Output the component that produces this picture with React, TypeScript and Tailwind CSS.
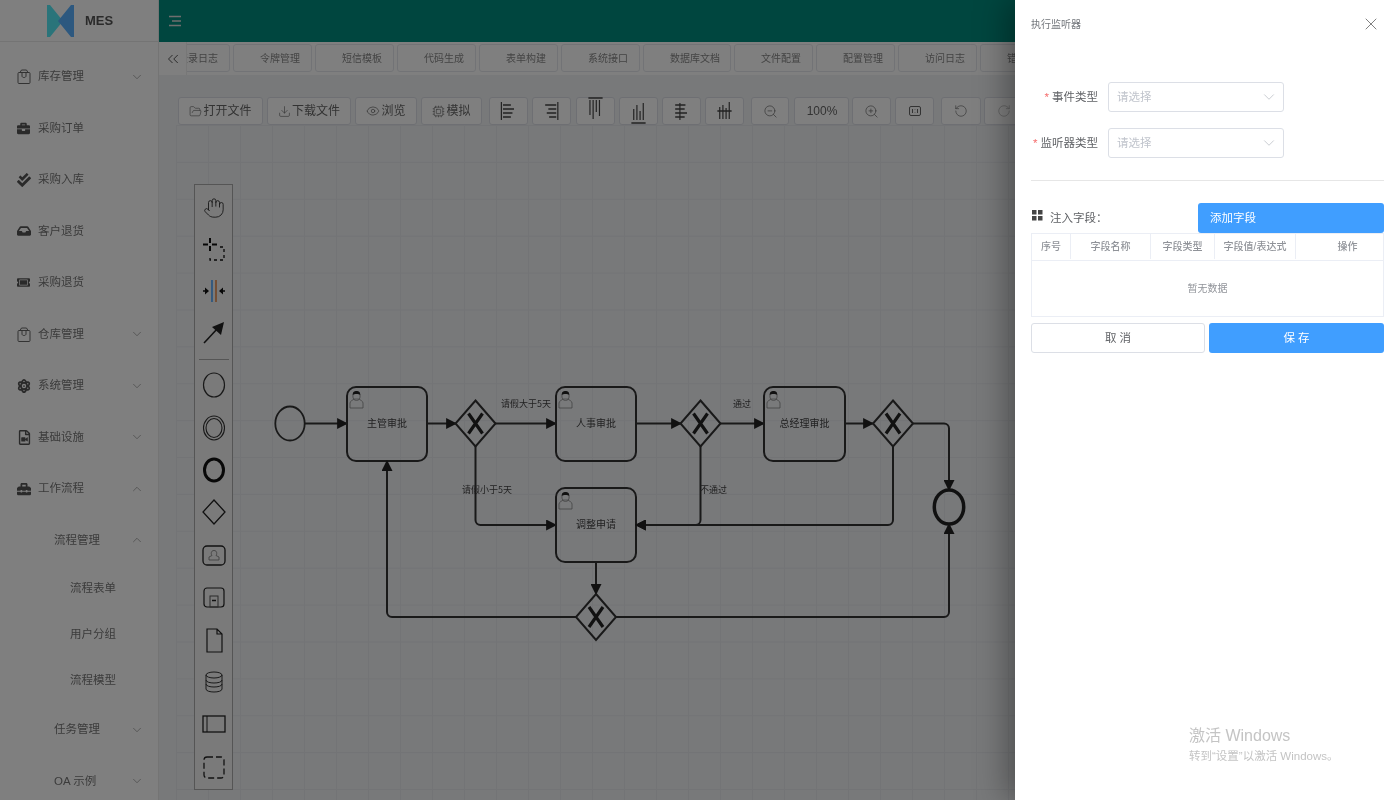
import type { ReactNode } from 'react';
import { ChevronDown, ChevronUp, ChevronsLeft, Download, Eye, FolderOpen, Cpu, Hand, RotateCcw, RotateCw, X, ZoomIn, ZoomOut } from 'lucide-react';
import { FaAtom, FaBriefcase, FaCheckDouble, FaInbox, FaRegFileVideo, FaTicketAlt, FaToolbox } from 'react-icons/fa';

type MenuItem = { label: string; icon?: ReactNode; depth: 0 | 1 | 2; arrow?: 'up' | 'down' };

const BagIcon = () => (
  <svg width="14" height="15" viewBox="0 0 14 15" fill="none" stroke="#666" strokeWidth="1">
    <rect x="1" y="3.500" width="12" height="11" rx="1" />
    <path d="M3 3.500 4.500 1h5L11 3.500M5 3.500v3.500c0 2 4 2 4 0V3.500" />
  </svg>
);

const MENU: MenuItem[] = [
  { label: '库存管理', icon: <BagIcon />, depth: 0, arrow: 'down' },
  { label: '采购订单', icon: <FaBriefcase size={13} />, depth: 0 },
  { label: '采购入库', icon: <FaCheckDouble size={14} />, depth: 0 },
  { label: '客户退货', icon: <FaInbox size={14} />, depth: 0 },
  { label: '采购退货', icon: <FaTicketAlt size={13} />, depth: 0 },
  { label: '仓库管理', icon: <BagIcon />, depth: 0, arrow: 'down' },
  { label: '系统管理', icon: <FaAtom size={14} />, depth: 0, arrow: 'down' },
  { label: '基础设施', icon: <FaRegFileVideo size={15} />, depth: 0, arrow: 'down' },
  { label: '工作流程', icon: <FaToolbox size={14} />, depth: 0, arrow: 'up' },
  { label: '流程管理', depth: 1, arrow: 'up' },
  { label: '流程表单', depth: 2 },
  { label: '用户分组', depth: 2 },
  { label: '流程模型', depth: 2 },
  { label: '任务管理', depth: 1, arrow: 'down' },
  { label: 'OA 示例', depth: 1, arrow: 'down' },
];

const TABS = [
  { label: '登录日志', w: 'w-[79px]' },
  { label: '令牌管理', w: 'w-[79px]' },
  { label: '短信模板', w: 'w-[79px]' },
  { label: '代码生成', w: 'w-[79px]' },
  { label: '表单构建', w: 'w-[79px]' },
  { label: '系统接口', w: 'w-[79px]' },
  { label: '数据库文档', w: 'w-[88px]' },
  { label: '文件配置', w: 'w-[79px]' },
  { label: '配置管理', w: 'w-[79px]' },
  { label: '访问日志', w: 'w-[79px]' },
  { label: '错误日志', w: 'w-[79px]' },
];

function Bars({ lines }: { lines: number[][] }) {
  return (
    <svg width="19" height="24" viewBox="0 0 24 24" preserveAspectRatio="none" stroke="#444" strokeWidth="1.500" className="overflow-visible">
      {lines.map(([x1, y1, x2, y2], i) => (
        <line key={i} x1={x1} y1={y1} x2={x2} y2={y2} />
      ))}
    </svg>
  );
}

const ALIGN_ICONS: number[][][] = [
  [[3, 3, 3, 21], [5, 6, 15, 6], [5, 10, 19, 10], [5, 14, 17, 14], [5, 18, 15, 18]],
  [[20, 3, 20, 21], [4, 6, 18, 6], [8, 10, 18, 10], [6, 14, 18, 14], [9, 18, 18, 18]],
  [[3, -1, 21, -1], [5, 1, 5, 16], [9, 1, 9, 20], [13, 1, 13, 13], [17, 1, 17, 17]],
  [[3, 24, 21, 24], [6, 10, 6, 21], [10, 6, 10, 21], [14, 12, 14, 21], [18, 4, 18, 21]],
  [[10, 4, 10, 21], [4, 6, 17, 6], [4, 10, 16, 10], [4, 14, 19, 14], [4, 18, 16, 18]],
  [[3, 12, 21, 12], [6, 8, 6, 20], [10, 6, 10, 20], [14, 9, 14, 20], [18, 3, 18, 20]],
];

function ToolButton({ className, children }: { className: string; children: ReactNode }) {
  return (
    <div className={`h-[28px] flex items-center justify-center gap-px shrink-0 bg-white border border-[#dcdfe6] rounded-[3px] text-[12px] text-[#666] ${className}`}>
      {children}
    </div>
  );
}

function Person({ x, y }: { x: number; y: number }) {
  return (
    <g transform={`translate(${x} ${y})`}>
      <path d="M1 18v-5c0-2 3-3 4-4h5c1 1 4 2 4 4v5z" fill="#fff" fillOpacity="0.15" stroke="#777" strokeWidth="0.700" />
      <ellipse cx="7.500" cy="6" rx="3.600" ry="4.400" fill="#fff" fillOpacity="0.15" stroke="#777" strokeWidth="0.700" />
      <path d="M3.800 5C3.600 1.800 5.500 1 7.500 1s3.900.8 3.700 4c-1.500-1.300-5.800-1.300-7.400 0z" fill="#222" />
    </g>
  );
}

function Task({ x, y, w, label }: { x: number; y: number; w: number; label: string }) {
  return (
    <g>
      <rect x={x} y={y} width={w} height={74} rx={9} fill="#fff" fillOpacity="0.06" stroke="#333" strokeWidth="2" />
      <Person x={x + 2} y={y + 3} />
      <text x={x + w / 2} y={y + 40} textAnchor="middle" fontSize="10" fill="#444">{label}</text>
    </g>
  );
}

function Gateway({ cx, cy }: { cx: number; cy: number }) {
  return (
    <g>
      <polygon points={`${cx},${cy - 23} ${cx + 20},${cy} ${cx},${cy + 23} ${cx - 20},${cy}`} fill="none" stroke="#333" strokeWidth="2" />
      <path d={`M${cx - 7},${cy - 10} L${cx + 7},${cy + 10} M${cx + 7},${cy - 10} L${cx - 7},${cy + 10}`} stroke="#222" strokeWidth="3.200" />
    </g>
  );
}

function Arrow({ d }: { d: string }) {
  return <path d={d} fill="none" stroke="#333" strokeWidth="2" markerEnd="url(#flow-end)" />;
}

function Diagram() {
  return (
    <svg className="absolute left-0 top-0" width="839" height="675" viewBox="176 125 839 675" fontFamily="'Noto Sans CJK SC', sans-serif">
      <defs>
        <marker id="flow-end" viewBox="0 0 10 10" refX="9" refY="5" markerWidth="5.500" markerHeight="5.500" orient="auto">
          <path d="M0 0 10 5 0 10z" fill="#222" />
        </marker>
      </defs>
      <ellipse cx="290" cy="423.500" rx="14.700" ry="17" fill="none" stroke="#333" strokeWidth="1.800" />
      <Arrow d="M305 423.500H347" />
      <Task x={347} y={387} w={80} label="主管审批" />
      <Arrow d="M427 423.500H456" />
      <Gateway cx={475.500} cy={423.500} />
      <Arrow d="M495 423.500H556" />
      <Task x={556} y={387} w={80} label="人事审批" />
      <Arrow d="M636 423.500H681" />
      <Gateway cx={700.500} cy={423.500} />
      <Arrow d="M720 423.500H764" />
      <Task x={764} y={387} w={81} label="总经理审批" />
      <Arrow d="M845 423.500H873" />
      <Gateway cx={893} cy={423.500} />
      <Arrow d="M913 423.500H944a5 5 0 0 1 5 5V490" />
      <ellipse cx="949" cy="507" rx="14.700" ry="17" fill="none" stroke="#222" strokeWidth="3.500" />
      <Arrow d="M475.500 446V520a5 5 0 0 0 5 5H556" />
      <Task x={556} y={488} w={80} label="调整申请" />
      <Arrow d="M700.500 446V520a5 5 0 0 1-5 5H636" />
      <Arrow d="M893 446V520a5 5 0 0 1-5 5H636" />
      <Arrow d="M596 562V594" />
      <Gateway cx={596} cy={617} />
      <Arrow d="M576 617H392a5 5 0 0 1-5-5V461" />
      <Arrow d="M616 617H944a5 5 0 0 0 5-5V524" />
      <g fontSize="9" fill="#444">
        <text x="501" y="407">请假大于5天</text>
        <text x="462" y="493">请假小于5天</text>
        <text x="733" y="407">通过</text>
        <text x="700" y="493">不通过</text>
      </g>
    </svg>
  );
}

const PALETTE_TOOLS: ReactNode[] = [
  <Hand key="h" size={22} strokeWidth={1} color="#333" />,
  <svg key="l" width="26" height="26" viewBox="0 0 26 26" fill="none" stroke="#111">
    <path d="M9 2v5M9 10v5M2 8.500h5M11 8.500h5" strokeWidth="2" />
    <path d="M19 11h4v13H9v-5" strokeDasharray="3 3" strokeWidth="1.300" />
  </svg>,
  <svg key="s" width="26" height="26" viewBox="0 0 26 26" fill="none">
    <path d="M11 2v22" stroke="#1e90ff" strokeWidth="1.300" />
    <path d="M15 2v22" stroke="#e07020" strokeWidth="1.300" />
    <path d="M2 13h3M21 13h3" stroke="#111" strokeWidth="1.400" />
    <path d="M8 13l-4-3.500v7zM18 13l4-3.500v7z" fill="#111" />
  </svg>,
  <svg key="c" width="26" height="26" viewBox="0 0 26 26" fill="none">
    <path d="M3 24 17 9" stroke="#222" strokeWidth="1.600" />
    <path d="M23 3l-3 13-9-8z" fill="#222" />
  </svg>,
];

const PALETTE_SHAPES: ReactNode[] = [
  <svg key="e" width="26" height="30" viewBox="0 0 26 30" fill="none" stroke="#333"><ellipse cx="13" cy="15" rx="10.500" ry="12" strokeWidth="1.200" /></svg>,
  <svg key="i" width="26" height="30" viewBox="0 0 26 30" fill="none" stroke="#333"><ellipse cx="13" cy="15" rx="10.500" ry="12" strokeWidth="1.100" /><ellipse cx="13" cy="15" rx="8" ry="9.500" strokeWidth="1.100" /></svg>,
  <svg key="t" width="26" height="30" viewBox="0 0 26 30" fill="none" stroke="#111"><ellipse cx="13" cy="15" rx="9.500" ry="11" strokeWidth="3" /></svg>,
  <svg key="g" width="26" height="30" viewBox="0 0 26 30" fill="none" stroke="#222"><polygon points="13,3 24,15 13,27 2,15" strokeWidth="1.300" /></svg>,
  <svg key="u" width="26" height="26" viewBox="0 0 26 26" fill="none" stroke="#222"><rect x="2" y="4" width="22" height="19" rx="4" strokeWidth="1.300" /><path d="M8 18v-3l3-1.500c-1-.8-1.500-5 2-5s3 4.200 2 5l3 1.500v3z" stroke="#777" strokeWidth="0.800" /></svg>,
  <svg key="p" width="26" height="26" viewBox="0 0 26 26" fill="none" stroke="#222"><rect x="3" y="4" width="20" height="19" rx="3" strokeWidth="1.200" /><rect x="9" y="12" width="8" height="11" stroke="#555" /><path d="M11 16.500h4" strokeWidth="1.500" /></svg>,
  <svg key="d" width="26" height="26" viewBox="0 0 26 26" fill="none" stroke="#222"><path d="M6 2h10l5 5v18H6zM16 2v5h5" strokeWidth="1.200" /></svg>,
  <svg key="b" width="26" height="26" viewBox="0 0 26 26" fill="none" stroke="#333" strokeWidth="1"><ellipse cx="13" cy="6" rx="8" ry="3" /><path d="M5 6v14c0 4 16 4 16 0V6M5 11c0 4 16 4 16 0M5 15c0 4 16 4 16 0" /></svg>,
  <svg key="o" width="26" height="26" viewBox="0 0 26 26" fill="none" stroke="#222"><rect x="2" y="5" width="22" height="16" strokeWidth="1.300" /><path d="M6 5v16" strokeWidth="1" /></svg>,
  <svg key="r" width="26" height="26" viewBox="0 0 26 26" fill="none" stroke="#222"><rect x="3" y="3" width="20" height="21" rx="3" strokeWidth="1.300" strokeDasharray="6 3" /></svg>,
];

function Palette() {
  return (
    <div className="absolute left-[18px] top-[59px] w-[39px] h-[606px] pt-[2px] bg-[#f5f5f5] border border-[#aaa] flex flex-col items-center">
      {PALETTE_TOOLS.map((icon, i) => (
        <div key={i} className="h-[41.500px] w-full flex items-center justify-center shrink-0">{icon}</div>
      ))}
      <div className="w-[30px] mt-[6px] mb-[4px] border-t border-[#aaa] shrink-0" />
      {PALETTE_SHAPES.map((icon, i) => (
        <div key={i} className="h-[42.400px] w-full flex items-center justify-center shrink-0">{icon}</div>
      ))}
    </div>
  );
}

function Sidebar() {
  return (
    <aside className="w-[159px] shrink-0 h-full bg-white border-r border-[#e8e8e8] overflow-hidden">
      <div className="h-[42px] flex items-center pl-[47px] border-b border-[#e8e8e8]">
        <svg width="28" height="34" viewBox="0 0 28 34">
          <polygon points="0,1 3,1 16,17 3,33 0,33" fill="#55e8f5" />
          <polygon points="27,1 24,1 11,17 24,33 27,33" fill="#5ab0ff" />
        </svg>
        <span className="ml-[10px] text-[13px] font-bold text-[#555]">MES</span>
      </div>
      <div className="pt-[9px]">
        {MENU.map((m) => (
          <div
            key={m.label}
            className={
              m.depth === 2
                ? 'h-[46px] flex items-center pl-[70px] text-[11.500px] text-[#777]'
                : m.depth === 1
                  ? 'h-[51.500px] flex items-center pl-[54px] pr-[14px] text-[11.500px] text-[#777]'
                  : 'h-[51.500px] flex items-center pl-[17px] pr-[14px] text-[11.500px] text-[#777]'
            }
          >
            {m.icon && <span className="w-[21px] shrink-0 flex items-center text-[#555]">{m.icon}</span>}
            <span>{m.label}</span>
            {m.arrow === 'down' && <ChevronDown size={14} strokeWidth={1} color="#777" className="ml-auto" />}
            {m.arrow === 'up' && <ChevronUp size={14} strokeWidth={1} color="#777" className="ml-auto" />}
          </div>
        ))}
      </div>
    </aside>
  );
}

function Main() {
  return (
    <main className="flex-1 min-w-0 h-full flex flex-col bg-[#f0f2f5]">
      <header className="h-[42px] shrink-0 bg-[#008c7e] flex items-center pl-[10px]">
        <svg width="12" height="12" viewBox="0 0 12 12" stroke="#ddd" strokeWidth="1.500">
          <path d="M0 1.500h12M3 6h9M0 10.500h12" />
        </svg>
      </header>
      <div className="h-[33px] shrink-0 bg-white flex">
        <div className="w-[28px] shrink-0 flex items-center justify-center bg-white border-r border-[#eee]">
          <ChevronsLeft size={18} color="#444" strokeWidth={1.200} />
        </div>
        <div className="flex-1 min-w-0 overflow-hidden flex gap-[3px] pt-[2px] h-[33px]">
          {TABS.map((t, i) => (
            <div
              key={t.label}
              className={`h-[28px] shrink-0 flex items-center pl-[26px] pt-[1px] bg-white border border-[#e4e7ed] rounded-[3px] text-[10px] text-[#888] ${t.w} ${i === 0 ? '-ml-[36px]' : ''}`}
            >
              {t.label}
            </div>
          ))}
        </div>
      </div>
      <div className="h-[22px] shrink-0" />
      <div className="flex pl-[19px] shrink-0">
        <ToolButton className="w-[85px]"><FolderOpen size={13} strokeWidth={1.200} />打开文件</ToolButton>
        <ToolButton className="w-[84px] ml-[4px]"><Download size={13} strokeWidth={1.200} />下载文件</ToolButton>
        <ToolButton className="w-[62px] ml-[4px]"><Eye size={14} strokeWidth={1.200} />浏览</ToolButton>
        <ToolButton className="w-[61px] ml-[4px]"><Cpu size={13} strokeWidth={1.200} />模拟</ToolButton>
        <div className="flex gap-[4.300px] ml-[7px]">
          {ALIGN_ICONS.map((lines, i) => (
            <ToolButton key={i} className="w-[39px]"><Bars lines={lines} /></ToolButton>
          ))}
        </div>
        <ToolButton className="w-[38px] ml-[7px]"><ZoomOut size={15} strokeWidth={1.100} /></ToolButton>
        <ToolButton className="w-[55px] ml-[5px]">100%</ToolButton>
        <ToolButton className="w-[39px] ml-[3px]"><ZoomIn size={15} strokeWidth={1.100} /></ToolButton>
        <ToolButton className="w-[39px] ml-[4px]">
          <svg width="12" height="12" viewBox="0 0 12 12" fill="none" stroke="#666"><rect x="0.500" y="1.500" width="11" height="9" rx="1.500" /><path d="M3.500 4v4M8.500 4v4M6 4.500v.5M6 7v.5" /></svg>
        </ToolButton>
        <ToolButton className="w-[40px] ml-[7px]"><RotateCcw size={14} strokeWidth={1.100} /></ToolButton>
        <ToolButton className="w-[40px] ml-[3px]"><RotateCw size={14} strokeWidth={1.100} color="#aaa" /></ToolButton>
      </div>
      <div className="flex-1 ml-[17px] relative bg-[linear-gradient(#e6e8ec_1px,transparent_1px),linear-gradient(90deg,#e6e8ec_1px,transparent_1px)] bg-[size:32px_36.900px]">
        <Diagram />
        <Palette />
      </div>
    </main>
  );
}

function SelectField({ label }: { label: string }) {
  return (
    <div className="flex items-center h-[30px]">
      <div className="w-[67px] shrink-0 pt-[2px] text-right text-[11.500px] whitespace-nowrap text-[#606266]">
        <span className="text-[#f56c6c] mr-[3px]">*</span>{label}
      </div>
      <div className="ml-[10px] w-[176px] h-[30px] flex items-center justify-between pl-[8px] pr-[5px] border border-[#dcdfe6] rounded-[3px] text-[11.500px] text-[#c0c4cc]">
        <span className="pt-[2px]">请选择</span>
        <ChevronDown size={18} strokeWidth={0.900} color="#b0b4bc" />
      </div>
    </div>
  );
}

const COLUMNS = [
  { label: '序号', w: 'w-[39px]' },
  { label: '字段名称', w: 'w-[80px]' },
  { label: '字段类型', w: 'w-[64px]' },
  { label: '字段值/表达式', w: 'w-[81px]' },
  { label: '操作', w: 'flex-1 pl-[16px]' },
];

function Drawer() {
  return (
    <section className="absolute right-0 top-0 w-[385px] h-full bg-white shadow-[-8px_0_30px_rgba(0,0,0,0.35)] px-[16px]">
      <div className="h-[48px] flex items-center justify-between text-[10px] text-[#72767b]">
        执行监听器
        <X size={20} strokeWidth={0.900} color="#555" className="mr-[3px]" />
      </div>
      <div className="mt-[34px] flex flex-col gap-[16px]">
        <SelectField label="事件类型" />
        <SelectField label="监听器类型" />
      </div>
      <div className="mt-[22px] border-t border-[#e6e6e6]" />
      <div className="mt-[22px] h-[30px] flex">
        <div className="flex items-start pl-[1px] text-[11.500px] text-[#606266]">
          <svg width="11" height="11" viewBox="0 0 11 11" fill="#444" className="mt-[7px]">
            <rect width="4.500" height="4.500" /><rect x="6" width="4.500" height="4.500" /><rect y="6" width="4.500" height="4.500" /><rect x="6" y="6" width="4.500" height="4.500" />
          </svg>
          <span className="ml-[7px] mt-[7px]">注入字段：</span>
        </div>
        <div className="ml-auto w-[186px] h-[30px] flex items-center pl-[12px] pt-[2px] bg-[#409eff] rounded-[3px] text-[11.500px] text-white">添加字段</div>
      </div>
      <div className="border border-[#ebeef5]">
        <div className="h-[27px] flex pb-px border-b border-[#ebeef5] text-[10px] font-medium text-[#909399]">
          {COLUMNS.map((c) => (
            <div key={c.label} className={`${c.w} flex items-center justify-center border-r border-[#ebeef5] last:border-r-0`}>{c.label}</div>
          ))}
        </div>
        <div className="h-[55px] flex items-center justify-center text-[10px] text-[#909399]">暂无数据</div>
      </div>
      <div className="mt-[6px] flex gap-[4px]">
        <div className="w-[174px] h-[30px] flex items-center justify-center pt-[2px] border border-[#dcdfe6] rounded-[3px] text-[11.500px] text-[#606266]">取 消</div>
        <div className="flex-1 h-[30px] flex items-center justify-center pt-[2px] bg-[#409eff] rounded-[3px] text-[11.500px] text-white">保 存</div>
      </div>
      <div className="absolute left-[174px] top-[726px] text-[#c4c4c4]">
        <div className="text-[16px] leading-[20px]">激活 Windows</div>
        <div className="text-[11.500px] leading-[20px]">转到“设置”以激活 Windows。</div>
      </div>
    </section>
  );
}

export default function App() {
  return (
    <div className="relative w-[1400px] h-[800px] overflow-hidden flex blur-[0.4px] font-['Liberation_Sans','Noto_Sans_CJK_SC',sans-serif]">
      <Sidebar />
      <Main />
      <div className="absolute inset-0 bg-black/50" />
      <Drawer />
    </div>
  );
}
